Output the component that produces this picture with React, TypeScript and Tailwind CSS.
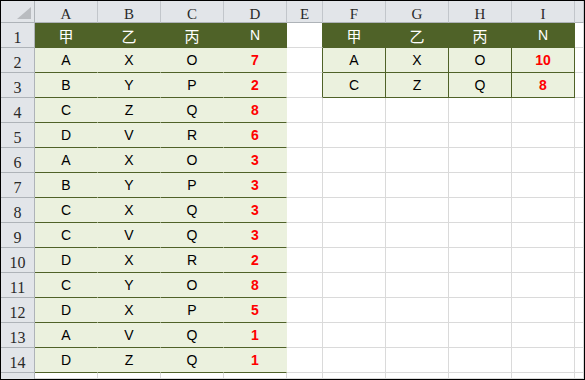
import React from "react";

const OLIVE = "#4f6228";

const colW = [
  "w-[63px]",
  "w-[63px]",
  "w-[63px]",
  "w-[63px]",
  "w-[36px]",
  "w-[63px]",
  "w-[63px]",
  "w-[63px]",
  "w-[63px]",
  "w-[9px]",
];
const letters = ["A", "B", "C", "D", "E", "F", "G", "H", "I", ""];

const heads = ["甲", "乙", "丙", "N"];

const table1 = [
  ["A", "X", "O", "7"],
  ["B", "Y", "P", "2"],
  ["C", "Z", "Q", "8"],
  ["D", "V", "R", "6"],
  ["A", "X", "O", "3"],
  ["B", "Y", "P", "3"],
  ["C", "X", "Q", "3"],
  ["C", "V", "Q", "3"],
  ["D", "X", "R", "2"],
  ["C", "Y", "O", "8"],
  ["D", "X", "P", "5"],
  ["A", "V", "Q", "1"],
  ["D", "Z", "Q", "1"],
];

const table2 = [
  ["A", "X", "O", "10"],
  ["C", "Z", "Q", "8"],
];

// border + background of a sheet cell, by row (1-based) and column index
function cellClass(r: number, c: number) {
  const t1 = c <= 3 && r >= 1 && r <= 14;
  const t2 = c >= 5 && c <= 8 && r >= 1 && r <= 3;
  if ((t1 || t2) && r === 1) return "bg-[#4f6228] border-[#4f6228] text-white";
  if (t1) return "bg-[#ebf1de] border-b-[#4f6228] border-r-[#ebf1de]";
  if (t2) return "bg-[#ebf1de] border-[#4f6228]";
  if (c === 4 && r <= 3) return "bg-white border-b-[#dadada] border-r-[#4f6228]";
  return "bg-white border-[#dadada]";
}

function cellText(r: number, c: number): { text: string; num: boolean } {
  if (r === 1 && c <= 3) return { text: heads[c], num: false };
  if (r === 1 && c >= 5 && c <= 8) return { text: heads[c - 5], num: false };
  if (r >= 2 && r <= 14 && c <= 3) return { text: table1[r - 2][c], num: c === 3 };
  if (r >= 2 && r <= 3 && c >= 5 && c <= 8)
    return { text: table2[r - 2][c - 5], num: c === 8 };
  return { text: "", num: false };
}

function Cell({ r, c }: { r: number; c: number }) {
  const { text, num } = cellText(r, c);
  const cjk = r === 1 && text !== "N";
  return (
    <div
      className={`${colW[c]} h-full shrink-0 border-r border-b flex items-center justify-center ${cellClass(r, c)}`}
    >
      {text && (
        <span
          className={
            cjk
              ? "text-[15px] leading-none [font-family:'Noto_Sans_CJK_SC',sans-serif]"
              : num
              ? "pt-[1px] text-[14px] font-bold text-[#ff0000] [font-family:'Liberation_Sans',Arial,sans-serif]"
              : "pt-[1px] text-[14px] [font-family:'Liberation_Sans',Arial,sans-serif]"
          }
        >
          {text}
        </span>
      )}
    </div>
  );
}

export default function App() {
  const rows = Array.from({ length: 15 }, (_, i) => i + 1);
  return (
    <div className="w-[585px] h-[380px] border border-black bg-white overflow-hidden flex flex-col">
      {/* column letters */}
      <div className="flex h-[22px] shrink-0">
        <div className="w-[34px] shrink-0 bg-[#e2e5e9] border-r border-b border-[#aeb3b8] flex items-end justify-end pr-[3px] pb-[3px]">
          <svg width="14" height="12" viewBox="0 0 14 12">
            <polygon points="14,0 14,12 0,12" fill="#b9bcc0" />
          </svg>
        </div>
        {letters.map((l, c) => (
          <div
            key={c}
            className={`${colW[c]} shrink-0 bg-[#e2e5e9] border-r border-b border-r-[#c2c6cb] border-b-[#aeb3b8] flex items-center justify-center pt-[5px] text-[15px] text-[#2a2a2a] [font-family:'Liberation_Serif',serif]`}
          >
            {l}
          </div>
        ))}
      </div>

      {rows.map((r) => (
        <div key={r} className={`flex shrink-0 ${r === 15 ? "h-[6px]" : "h-[25px]"}`}>
          <div className="w-[34px] shrink-0 bg-[#e2e5e9] border-r border-b border-[#aeb3b8] flex items-center justify-center pt-[6px] text-[16px] text-[#2a2a2a] [font-family:'Liberation_Serif',serif]">
            {r < 15 ? r : ""}
          </div>
          {colW.map((_, c) => (
            <Cell key={c} r={r} c={c} />
          ))}
        </div>
      ))}
    </div>
  );
}
